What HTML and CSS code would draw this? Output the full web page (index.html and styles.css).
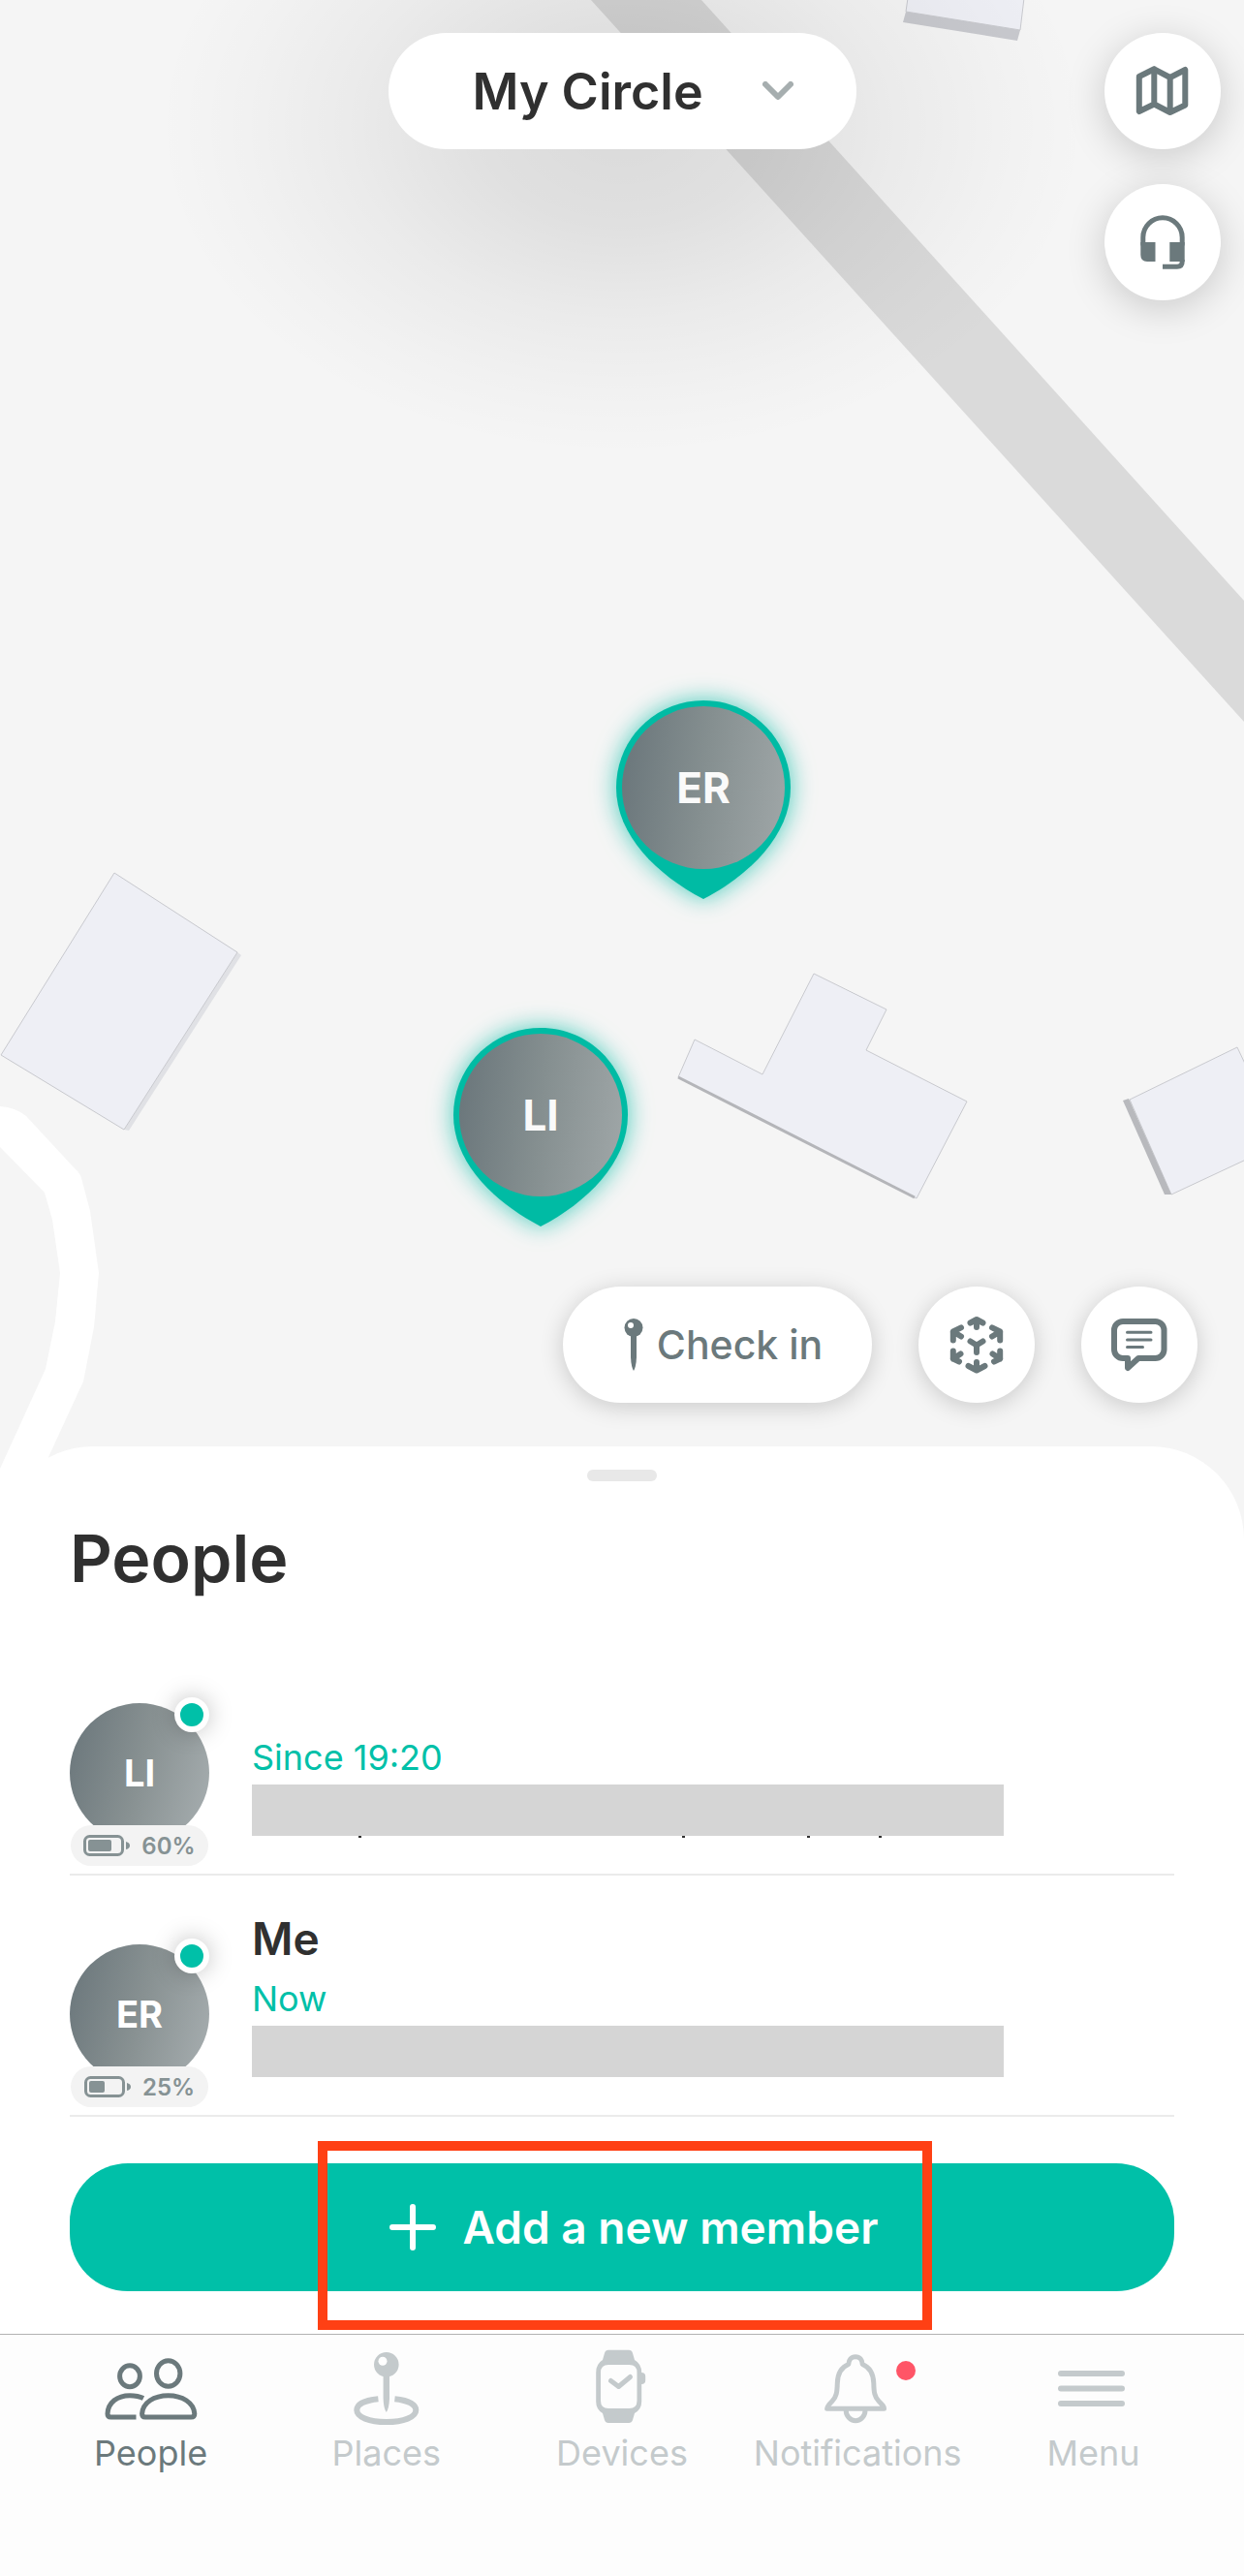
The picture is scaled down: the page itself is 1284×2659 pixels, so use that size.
FILE: index.html
```html
<!DOCTYPE html>
<html lang="en">
<head>
    <meta charset="utf-8">
    <title>My Circle</title>
    <meta name="viewport" content="width=device-width, initial-scale=1.0">
    <link rel="stylesheet" href="styles.css">
</head>
<body>
    <div class="app">
        <main class="map">
            <svg class="map-canvas" viewBox="0 0 1284 1593" preserveAspectRatio="xMidYMin slice" aria-hidden="true">
                <!-- roads -->
                <path class="road-main" d="M610 0H724L1284 620V745Z"/>
                <path class="road-side" d="M0 1142Q16 1143 27 1152L78 1207Q82 1210 84 1216L93 1250L102 1314L97 1370L86 1426L50 1504V1593H0V1516L47 1413L57 1364L62 1314L54 1259L46 1231L0 1184Z"/>
                <!-- buildings -->
                <path class="wall" d="M935 12L932 23L1050 42L1053 31Z"/>
                <path class="roof" d="M937 -2L935 12L1053 31L1057 -2Z"/>
                <path class="wall-light" d="M245 983L249 986L133 1167L128 1166Z"/>
                <path class="roof" d="M118 901L245 983L128 1166L1 1089Z"/>
                <path class="roof" d="M840 1005L915 1042L894 1084L998 1137L946 1237L700 1112L717 1073L787 1109Z"/>
                <path class="wall-edge" d="M700 1112L944 1236"/>
                <path class="roof" d="M1166 1135L1277 1081L1286 1100V1197L1209 1233Z"/>
                <path class="wall-dark" d="M1159 1136L1165 1134L1209 1233H1202Z"/>
            </svg>

            <button class="pin pin-er">
                <svg class="pin-shape" viewBox="0 0 180 206" aria-hidden="true">
                    <path d="M90 0C140 0 180 40 180 90C180 139 138 180 90 205C42 180 0 139 0 90C0 40 40 0 90 0Z"/>
                </svg>
                <span class="pin-face">ER</span>
            </button>
            <button class="pin pin-li">
                <svg class="pin-shape" viewBox="0 0 180 206" aria-hidden="true">
                    <path d="M90 0C140 0 180 40 180 90C180 139 138 180 90 205C42 180 0 139 0 90C0 40 40 0 90 0Z"/>
                </svg>
                <span class="pin-face">LI</span>
            </button>

            <header class="top-bar">
                <button class="circle-picker">
                    <span>My Circle</span>
                    <svg class="chevron" viewBox="0 0 32 20" aria-hidden="true"><path d="M3 3L16 16L29 3"/></svg>
                </button>
                <div class="side-buttons">
                    <button class="round-btn" aria-label="Map type">
                        <svg viewBox="0 0 120 120" aria-hidden="true">
                            <path class="line bold" d="M35.8 45L51.3 37.3L67.7 46L83.3 38V74.5L67.7 82L51.3 73.5L35.8 81ZM51.3 37.3V73.5M67.7 46V82"/>
                        </svg>
                    </button>
                    <button class="round-btn" aria-label="Support">
                        <svg viewBox="0 0 120 120" aria-hidden="true">
                            <path class="line" d="M39.8 62V55A20.2 20.2 0 0 1 80.2 55V62"/>
                            <path class="solid" d="M37.3 60H52.5V80H44Q37.3 80 37.3 73ZM67.3 60H82.7V80H67.3Z"/>
                            <path class="line butt" d="M80.2 78V80Q80.2 85.2 75 85.2H60"/>
                        </svg>
                    </button>
                </div>
            </header>

            <div class="map-actions">
                <button class="check-in">
                    <svg class="check-pin" viewBox="0 0 20 54" aria-hidden="true">
                        <path class="solid" d="M7 17H13V40Q12.5 50 10 54Q7.5 50 7 40Z"/>
                        <circle class="solid" cx="10" cy="9.5" r="9.5"/>
                        <circle class="shine" cx="7" cy="7" r="3"/>
                    </svg>
                    <span>Check in</span>
                </button>
                <button class="round-btn" aria-label="3D view">
                    <svg viewBox="0 0 120 120" aria-hidden="true">
                        <path class="line bold" d="M53.5 37.5L60 34L66.5 37.5M60 34V42M53.5 56.5L60 60.5L66.5 56.5M60 60.5V68M60 78V86.5M51.5 82L60 86.5L68.5 82"/>
                        <path class="line bold" d="M35.8 55.5V46.5L44 42.3M35.8 46.5L44 51.5M35.8 66.5V74.5L42 77.5M35.8 74.5L43.5 69.5"/>
                        <path class="line bold" d="M84.2 55.5V46.5L76 42.3M84.2 46.5L76 51.5M84.2 66.5V74.5L78 77.5M84.2 74.5L76.5 69.5"/>
                    </svg>
                </button>
                <button class="round-btn" aria-label="Messages">
                    <svg viewBox="0 0 120 120" aria-hidden="true">
                        <path class="line bold" d="M43 36H76.5A9 9 0 0 1 85.5 45V65A9 9 0 0 1 76.5 74H59L48 84V74H43A9 9 0 0 1 34 65V45A9 9 0 0 1 43 36Z"/>
                        <path class="line thin" d="M47.5 47.3H72M47.5 55H72M47.5 62.5H63.5"/>
                    </svg>
                </button>
            </div>
        </main>

        <section class="sheet">
            <div class="handle"></div>
            <h1>People</h1>
            <ul class="people">
                <li class="person">
                    <div class="avatar">
                        <span class="avatar-face">LI</span>
                        <span class="online"></span>
                        <span class="battery">
                            <svg viewBox="0 0 48 22" aria-hidden="true">
                                <rect class="cell" x="1.5" y="1.5" width="39" height="19" rx="5"/>
                                <rect class="charge" x="5" y="5" width="24" height="12" rx="2"/>
                                <path class="charge" d="M44 7Q48 8 48 11T44 15Z"/>
                            </svg>
                            60%
                        </span>
                    </div>
                    <div class="info">
                        <div class="name"></div>
                        <div class="status">Since 19:20</div>
                        <div class="place place-tails"></div>
                    </div>
                </li>
                <li class="person">
                    <div class="avatar">
                        <span class="avatar-face">ER</span>
                        <span class="online"></span>
                        <span class="battery">
                            <svg viewBox="0 0 48 22" aria-hidden="true">
                                <rect class="cell" x="1.5" y="1.5" width="39" height="19" rx="5"/>
                                <rect class="charge" x="5" y="5" width="16" height="12" rx="2"/>
                                <path class="charge" d="M44 7Q48 8 48 11T44 15Z"/>
                            </svg>
                            25%
                        </span>
                    </div>
                    <div class="info">
                        <div class="name">Me</div>
                        <div class="status">Now</div>
                        <div class="place"></div>
                    </div>
                </li>
            </ul>
            <div class="add-wrap">
                <button class="add-btn">
                    <svg class="plus" viewBox="0 0 48 48" aria-hidden="true"><path d="M24 3V45M3 24H45"/></svg>
                    <span>Add a new member</span>
                </button>
                <div class="highlight"></div>
            </div>
        </section>

        <nav class="tabs">
            <a class="tab active" href="#people">
                <svg viewBox="0 0 100 80" aria-hidden="true">
                    <ellipse class="line" cx="28" cy="28.7" rx="10.4" ry="11"/>
                    <ellipse class="line" cx="67.7" cy="26" rx="12.2" ry="13.2"/>
                    <path class="line butt" d="M42 51.5C38 49.5 34 48.7 28 48.7C15 48.7 5.5 56 5 67.5Q5 71 8.5 71H34.5"/>
                    <path class="line" d="M44 71H91.3Q94.8 71 94.8 67.5C94 56 82 48.7 67.7 48.7C53 48.7 41.4 56 40.6 67.5Q40.6 71 44 71Z"/>
                </svg>
                <span>People</span>
            </a>
            <a class="tab" href="#places">
                <svg viewBox="0 0 100 80" aria-hidden="true">
                    <path class="line bold butt" d="M41.4 52.2C28 53.5 19.3 57.5 19.3 63.8C19.3 71 32 76 49.8 76S80.3 71 80.3 63.8C80.3 57.5 71 53.5 58.4 52.2"/>
                    <path class="solid" d="M46.6 26H53V52Q52.5 62 49.8 66Q47 62 46.6 52Z"/>
                    <circle class="solid" cx="49.8" cy="16.7" r="12.8"/>
                    <circle class="shine" cx="46" cy="13.3" r="4.5"/>
                </svg>
                <span>Places</span>
            </a>
            <a class="tab" href="#devices">
                <svg viewBox="0 0 100 80" aria-hidden="true">
                    <path class="solid" fill-rule="evenodd" d="M36 1.7H57Q60 1.7 61 5L63 12Q70.2 16 70.2 25Q74.2 25 74.2 29V33Q74.2 37 70.2 37V55Q70.2 63 63 67L61 74Q60 77 57 77H36Q33 77 32 74L30 67Q23.2 63 23.2 55V25Q23.2 16 30 12L32 5Q33 1.7 36 1.7ZM36 17Q28 17 28 25V54Q28 62 36 62H57.5Q65.5 62 65.5 54V25Q65.5 17 57.5 17Z"/>
                    <path class="line" d="M38.5 33.5L46.5 39.5L58.5 29.5"/>
                </svg>
                <span>Devices</span>
            </a>
            <a class="tab" href="#notifications">
                <svg viewBox="0 0 100 80" aria-hidden="true">
                    <path class="line" d="M48 8.8C43.5 8.8 41 12 40.8 16.5C32 20 29.5 27 29.3 36C29 45 28.5 50 24 54.5C20 58.5 18.6 60 18.6 62.3H77.5C77.5 60 76 58.5 72 54.5C67.5 50 67 45 66.8 36C66.5 27 64 20 55.2 16.5C55 12 52.5 8.8 48 8.8Z"/>
                    <path class="line butt" d="M38.2 64A9.8 10.6 0 0 0 58 64"/>
                </svg>
                <span>Notifications</span>
                <i class="unread"></i>
            </a>
            <a class="tab" href="#menu">
                <svg viewBox="0 0 100 80" aria-hidden="true">
                    <path class="line bold" d="M17 26H80M17 41.5H80M17 57H80"/>
                </svg>
                <span>Menu</span>
            </a>
        </nav>
    </div>
</body>
</html>
```

FILE: styles.css
```css
* {
    box-sizing: border-box;
}

body {
    margin: 0;
    font-family: Inter, "Liberation Sans", sans-serif;
    color: #303030;
    background-color: #fff;
}

button {
    border: none;
    padding: 0;
    font: inherit;
    color: inherit;
    background: none;
}

.app {
    display: flex;
    flex-direction: column;
    min-height: 100vh;
}

/* icon strokes */
.line {
    fill: none;
    stroke: currentColor;
    stroke-width: 5px;
    stroke-linecap: round;
    stroke-linejoin: round;
}

.line.bold {
    stroke-width: 6px;
}

.line.thin {
    stroke-width: 3px;
}

.line.butt {
    stroke-linecap: butt;
}

.solid {
    fill: currentColor;
}

.shine {
    fill: #fff;
}

/* map */
.map {
    position: relative;
    flex: 1;
    display: flex;
    flex-direction: column;
    justify-content: space-between;
    min-height: 1400px;
    background-color: #f5f5f5;
}

.map-canvas {
    position: absolute;
    top: 0;
    left: 0;
    width: 100%;
    height: calc(100% + 100px);
    background-color: #f5f5f5;
}

.road-main {
    fill: #dadada;
}

.road-side {
    fill: #fff;
}

.roof {
    fill: #eeeff5;
    stroke: #c8c9ce;
    stroke-width: 1px;
}

.wall {
    fill: #c8c9ce;
}

.wall-light {
    fill: #e0e1e5;
}

.wall-dark {
    fill: #b8b9bd;
}

.wall-edge {
    stroke: #b4b5b9;
    stroke-width: 3px;
}

.pin {
    position: absolute;
    width: 180px;
    height: 206px;
}

.pin-er {
    left: 636px;
    top: 723px;
}

.pin-li {
    left: 468px;
    top: 1061px;
}

.pin-shape {
    display: block;
    width: 180px;
    height: 206px;
    overflow: visible;
    fill: #00bba4;
    filter: drop-shadow(0 0 12px rgba(0, 187, 164, 0.7));
}

.pin-face {
    position: absolute;
    top: 6px;
    left: 6px;
    width: 168px;
    height: 168px;
    border-radius: 50%;
    background: linear-gradient(97deg, #69757a, #858f90 50%, #a0a7a8);
    color: #fafafa;
    font-size: 44px;
    font-weight: 700;
    line-height: 168px;
}

.top-bar {
    position: relative;
    display: grid;
    grid-template-columns: 1fr auto 1fr;
    align-items: start;
    padding: 34px 24px 0;
}

/* wide soft shade behind the picker */
.top-bar::before {
    content: '';
    position: absolute;
    top: 0;
    left: 0;
    width: 100%;
    height: 520px;
    background: radial-gradient(480px 340px at 50% 130px, rgba(0, 0, 0, 0.11), rgba(0, 0, 0, 0.085) 30%, rgba(0, 0, 0, 0.045) 58%, rgba(0, 0, 0, 0.015) 82%, transparent);
    pointer-events: none;
}

.circle-picker {
    position: relative;
    grid-column: 2;
    display: flex;
    align-items: center;
    justify-content: space-between;
    width: 483px;
    height: 120px;
    padding: 0 65px 0 87px;
    border-radius: 60px;
    background-color: #fff;
    font-size: 52px;
    font-weight: 600;
}

.chevron {
    width: 32px;
    height: 20px;
    fill: none;
    stroke: #a6aeaf;
    stroke-width: 6px;
    stroke-linecap: round;
    stroke-linejoin: round;
}

.side-buttons {
    position: relative;
    display: flex;
    flex-direction: column;
    align-items: flex-end;
    gap: 36px;
}

.round-btn {
    width: 120px;
    height: 120px;
    border-radius: 50%;
    background-color: #fff;
    box-shadow: 0 4px 24px rgba(0, 0, 0, 0.18);
    color: #6b797c;
}

.side-buttons .round-btn {
    box-shadow: 0 8px 40px rgba(0, 0, 0, 0.18);
}

.round-btn svg {
    display: block;
}

.map-actions {
    position: relative;
    display: flex;
    justify-content: flex-end;
    gap: 48px;
    padding: 0 48px 45px;
}

.check-in {
    display: flex;
    align-items: center;
    justify-content: center;
    gap: 14px;
    width: 319px;
    height: 120px;
    padding-left: 12px;
    border-radius: 60px;
    background-color: #fff;
    box-shadow: 0 4px 24px rgba(0, 0, 0, 0.18);
    color: #6b797c;
    font-size: 41px;
    font-weight: 500;
}

.check-pin {
    width: 20px;
    height: 54px;
}

/* people sheet */
.sheet {
    position: relative;
    padding: 24px 72px 44px;
    border-radius: 96px 96px 0 0;
    background-color: #fff;
}

.handle {
    width: 72px;
    height: 12px;
    margin: 0 auto;
    border-radius: 6px;
    background-color: #e8e8e8;
}

h1 {
    margin: 37px 0;
    font-size: 68px;
    font-weight: 600;
    line-height: 84px;
}

.people {
    margin: 0;
    padding: 0;
    list-style: none;
}

.person {
    display: flex;
    gap: 44px;
    height: 249px;
    border-bottom: 2px solid #ebebeb;
}

.avatar {
    position: relative;
    width: 144px;
    height: 144px;
    margin-top: 71px;
}

.avatar-face {
    display: block;
    height: 144px;
    border-radius: 50%;
    background: linear-gradient(105deg, #69757a, #889192 50%, #a8afb1);
    color: #fff;
    font-size: 38px;
    font-weight: 700;
    line-height: 144px;
    text-align: center;
}

.online {
    position: absolute;
    top: -6px;
    right: 0;
    width: 36px;
    height: 36px;
    border: 6px solid #fff;
    border-radius: 50%;
    background-color: #00c0a8;
    box-shadow: 0 0 24px rgba(0, 0, 0, 0.25);
}

.battery {
    position: absolute;
    top: 126px;
    left: 1px;
    display: flex;
    align-items: center;
    justify-content: center;
    gap: 12px;
    width: 142px;
    height: 42px;
    border-radius: 21px;
    background-color: #f3f3f3;
    color: #869294;
    font-size: 24px;
    font-weight: 600;
}

.battery svg {
    width: 48px;
    height: 22px;
}

.cell {
    fill: none;
    stroke: #869294;
    stroke-width: 3px;
}

.charge {
    fill: #869294;
}

.info {
    flex: 1;
    padding-top: 35px;
}

.name {
    height: 60px;
    font-size: 46px;
    font-weight: 600;
    line-height: 60px;
}

.status {
    margin-top: 8px;
    color: #00c0a8;
    font-size: 36px;
    line-height: 48px;
}

.place {
    position: relative;
    max-width: 776px;
    height: 53px;
    margin-top: 4px;
    background-color: #d5d5d5;
}

/* letter tails showing under the bar */
.place-tails::after {
    content: '';
    position: absolute;
    top: 100%;
    left: 110px;
    width: 3px;
    height: 2px;
    background-color: #303030;
    box-shadow: 334px 0 #303030, 463px 0 #303030, 537px 0 #303030;
}

.add-wrap {
    position: relative;
    margin-top: 48px;
}

.add-btn {
    display: flex;
    align-items: center;
    justify-content: center;
    gap: 28px;
    width: 100%;
    height: 132px;
    padding-left: 24px;
    border-radius: 60px;
    background-color: #00c0a8;
    color: #fff;
    font-size: 46px;
    font-weight: 600;
}

.plus {
    width: 48px;
    height: 48px;
    fill: none;
    stroke: #fff;
    stroke-width: 6px;
    stroke-linecap: round;
}

.highlight {
    position: absolute;
    top: -23px;
    bottom: -40px;
    left: 50%;
    width: 634px;
    margin-left: -314px;
    border: 10px solid #ff4014;
    pointer-events: none;
}

/* bottom tabs */
.tabs {
    display: flex;
    padding: 14px 34px 103px;
    border-top: 1px solid #b2b2b2;
    background-color: #fdfdfd;
}

.tab {
    position: relative;
    flex: 1;
    display: flex;
    flex-direction: column;
    align-items: center;
    gap: 4px;
    color: #c4cacc;
    font-size: 36px;
    line-height: 48px;
    text-decoration: none;
}

.tab.active {
    color: #6b797c;
}

.tab svg {
    width: 100px;
    height: 80px;
}

.unread {
    position: absolute;
    top: 13px;
    left: 50%;
    width: 20px;
    height: 20px;
    margin-left: 40px;
    border-radius: 50%;
    background-color: #ff5567;
}
```
